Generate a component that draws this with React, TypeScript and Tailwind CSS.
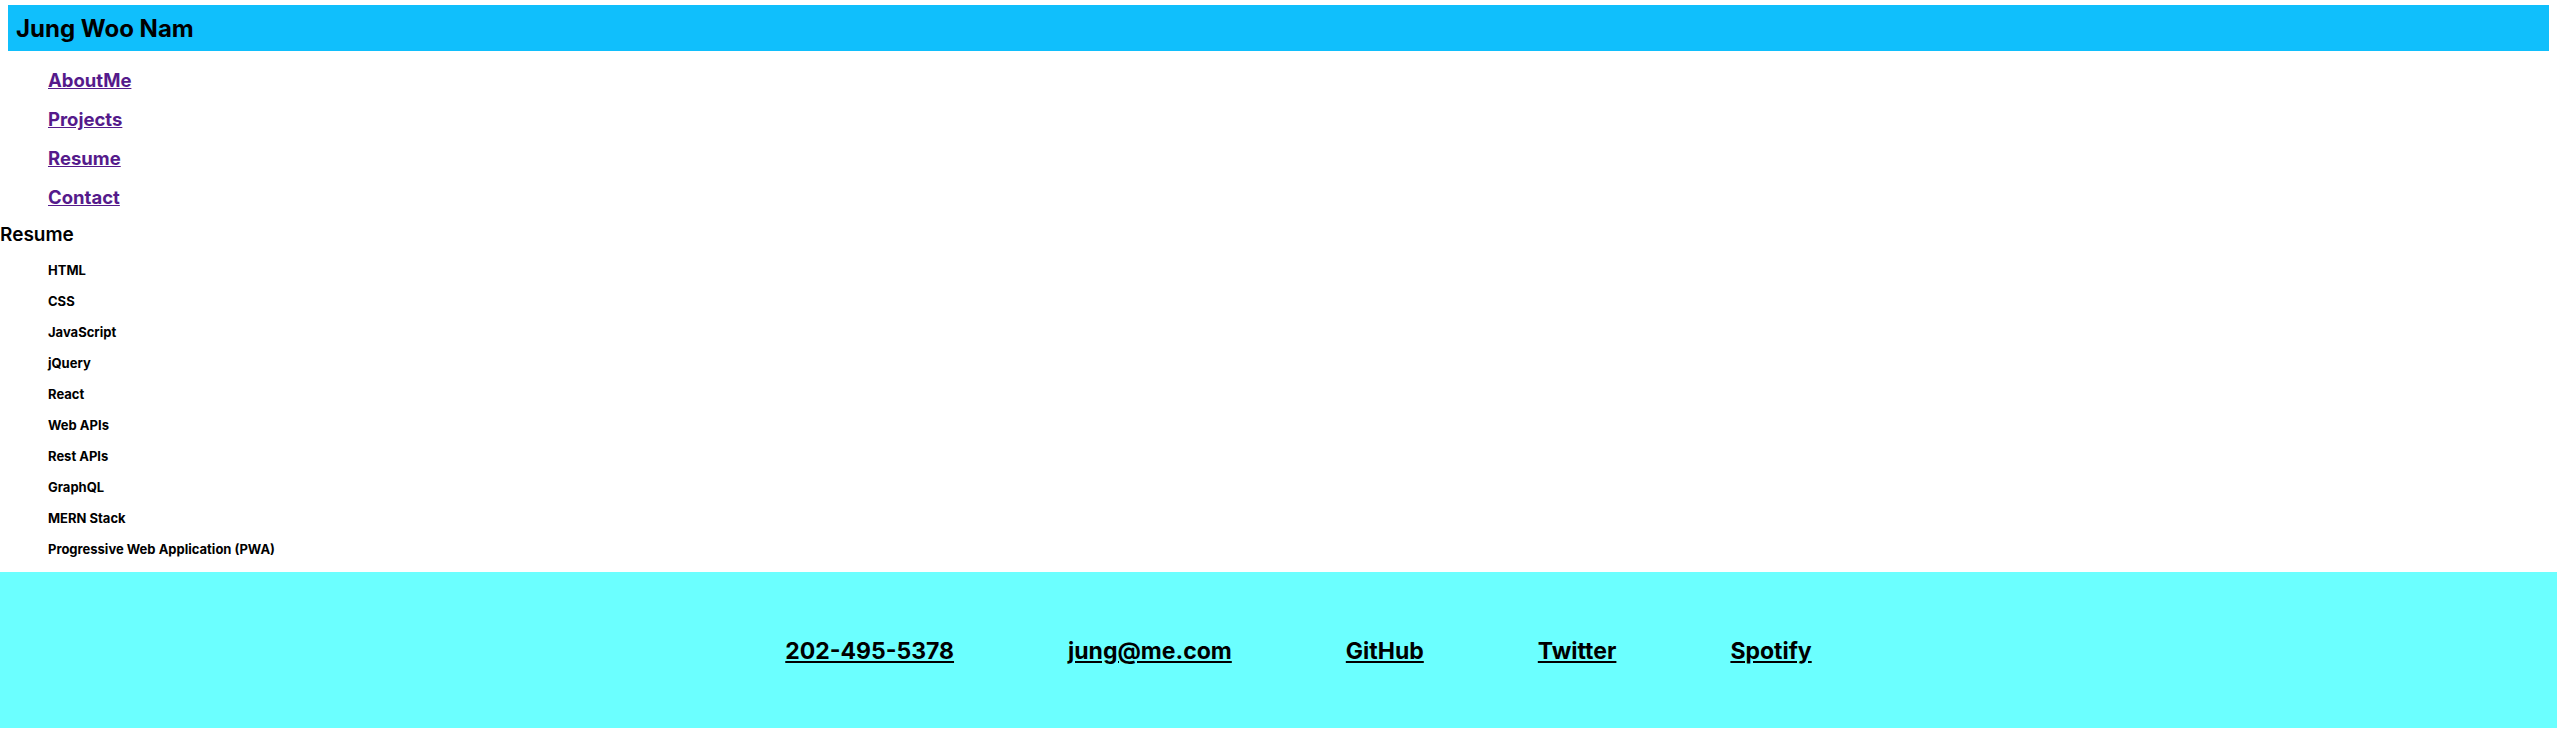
import React from 'react';

const navLinks = ['AboutMe', 'Projects', 'Resume', 'Contact'];

const skills = [
  'HTML',
  'CSS',
  'JavaScript',
  'jQuery',
  'React',
  'Web APIs',
  'Rest APIs',
  'GraphQL',
  'MERN Stack',
  'Progressive Web Application (PWA)',
];

const contacts = ['202-495-5378', 'jung@me.com', 'GitHub', 'Twitter', 'Spotify'];

const App: React.FC = () => {
  return (
    <div className="min-h-screen bg-white text-black font-['Inter','Noto_Sans',sans-serif]">
      <header className="mx-2 mt-[5px] h-[46px] bg-[#10bffc] flex items-center px-2 pt-[2px]">
        <h1 className="text-[24px] font-bold leading-none">Jung Woo Nam</h1>
      </header>

      <nav className="pt-[10px]">
        <ul className="pl-12">
          {navLinks.map((link) => (
            <li key={link} className="h-[39px] leading-[39px]">
              <a href={`#${link.toLowerCase()}`} className="text-[18.5px] font-bold text-[#551a8b] underline">
                {link}
              </a>
            </li>
          ))}
        </ul>
      </nav>

      <section>
        <h2 className="mt-[4px] h-[28px] leading-[28px] text-[19px] font-semibold">Resume</h2>
        <ul className="pl-12 pt-[6px]">
          {skills.map((skill) => (
            <li key={skill} className="h-[31px] leading-[31px] text-[13px] font-bold">
              {skill}
            </li>
          ))}
        </ul>
      </section>

      <footer className="mt-[7px] h-[156px] bg-[#6bffff] flex items-center justify-center pl-10 pt-[2px]">
        <ul className="flex items-center gap-[114px]">
          {contacts.map((c) => (
            <li key={c}>
              <a href="#" className="text-[23px] font-bold underline">
                {c}
              </a>
            </li>
          ))}
        </ul>
      </footer>
    </div>
  );
};

export default App;
